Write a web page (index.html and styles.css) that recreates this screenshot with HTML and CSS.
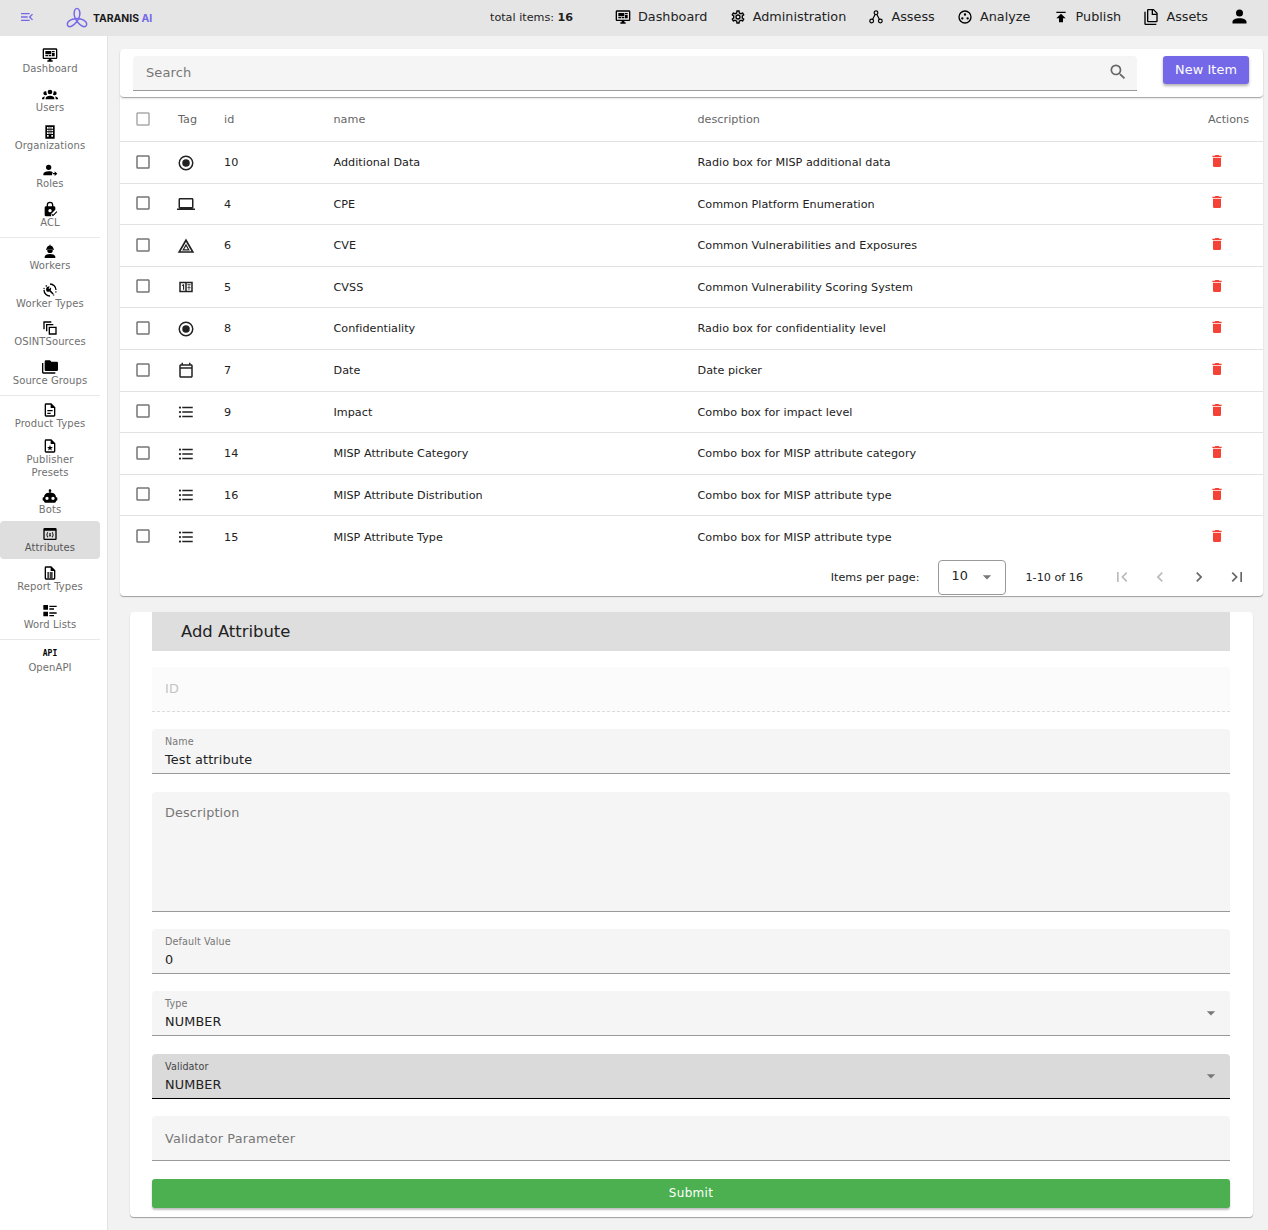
FILE: index.html
```html
<!doctype html>
<html lang="en">
<head>
	<meta charset="UTF-8" />
	<title>Taranis AI - Attributes</title>
	<link rel="stylesheet" href="styles.css">
</head>
<body>
<svg class="sprite" xmlns="http://www.w3.org/2000/svg">
	<symbol id="i-monitor" viewBox="0 0 24 24"><path d="M21,16V4H3V16H21M21,2A2,2 0 0,1 23,4V16A2,2 0 0,1 21,18H14V20H16V22H8V20H10V18H3C1.89,18 1,17.1 1,16V4C1,2.89 1.89,2 3,2H21M5,6H14V11H5V6M15,6H19V8H15V6M19,9V14H15V9H19M5,12H9V14H5V12M10,12H14V14H10V12Z"/></symbol>
	<symbol id="i-users" viewBox="0 0 24 24"><path d="M12,5.5A3.5,3.5 0 0,1 15.5,9A3.5,3.5 0 0,1 12,12.5A3.5,3.5 0 0,1 8.5,9A3.5,3.5 0 0,1 12,5.5M5,8C5.56,8 6.08,8.15 6.53,8.42C6.38,9.85 6.8,11.27 7.66,12.38C7.16,13.34 6.16,14 5,14A3,3 0 0,1 2,11A3,3 0 0,1 5,8M19,8A3,3 0 0,1 22,11A3,3 0 0,1 19,14C17.84,14 16.84,13.34 16.34,12.38C17.2,11.27 17.62,9.85 17.47,8.42C17.92,8.15 18.44,8 19,8M5.5,18.25C5.5,16.18 8.41,14.5 12,14.5C15.59,14.5 18.5,16.18 18.5,18.25V20H5.5V18.25M0,20V18.5C0,17.11 1.89,15.94 4.45,15.6C3.86,16.28 3.5,17.22 3.5,18.25V20H0M24,20H20.5V18.25C20.5,17.22 20.14,16.28 19.55,15.6C22.11,15.94 24,17.11 24,18.5V20Z"/></symbol>
	<symbol id="i-office" viewBox="0 0 24 24"><path fill-rule="evenodd" d="M5,2H19V22H5V2M7.5,4.5V7H10V4.5H7.5M11,4.5V7H13V4.5H11M14,4.5V7H16.5V4.5H14M7.5,8.5V11H10V8.5H7.5M11,8.5V11H13V8.5H11M14,8.5V11H16.5V8.5H14M7.5,12.5V15H10V12.5H7.5M11,12.5V15H13V12.5H11M14,12.5V15H16.5V12.5H14M7.5,16.5V19H10V16.5H7.5M14,16.5V19H16.5V16.5H14Z"/></symbol>
	<symbol id="i-role" viewBox="0 0 24 24"><path d="M10,4A4,4 0 0,1 14,8A4,4 0 0,1 10,12A4,4 0 0,1 6,8A4,4 0 0,1 10,4M10,14C13,14 15.5,14.8 16.8,16H15V20H2V18C2,15.79 5.58,14 10,14M19,14L23,17.5L19,21V18.5H16V16.5H19V14Z"/></symbol>
	<symbol id="i-lock" viewBox="0 0 24 24"><path d="M12,1A5,5 0 0,1 17,6V8H18A2,2 0 0,1 20,10V13.2L13.2,20L13.9,23H6A2,2 0 0,1 4,21V10A2,2 0 0,1 6,8H7V6A5,5 0 0,1 12,1M12,3A3,3 0 0,0 9,6V8H15V6A3,3 0 0,0 12,3M12,12A2.5,2.5 0 0,0 9.5,14.5A2.5,2.5 0 0,0 12,17A2.5,2.5 0 0,0 14.5,14.5A2.5,2.5 0 0,0 12,12M16.5,23L14,20.5L15.2,19.3L16.5,20.6L21.8,15.3L23,16.5L16.5,23Z"/></symbol>
	<symbol id="i-worker" viewBox="0 0 24 24"><path d="M12,15C16.42,15 20,16.79 20,19V21H4V19C4,16.79 7.58,15 12,15M8,9H16A4,4 0 0,1 12,13.5A4,4 0 0,1 8,9M11,1H13V3.5L14,2.5C15.8,3.4 17,5 17,7.2H18V8.5H6V7.2H7C7,5 8.2,3.4 10,2.5L11,3.5V1Z"/></symbol>
	<symbol id="i-wrench" viewBox="0 0 24 24"><path d="M12,2A10,10 0 0,1 22,12H20A8,8 0 0,0 12,4V2M12,22A10,10 0 0,1 2,12H4A8,8 0 0,0 12,20V22M2,10.5L4,11V9L2.6,8.6L2,10.5M5,6L6.5,7.4L7.8,5.8L6.3,4.6L5,6M20,14L22,14.2L21.4,16L20,15.6V14M17.5,18.5L18.9,19.5L17.6,20.8L16.2,19.6L17.5,18.5M7.5,7.5C8.8,6.5 10.5,6.4 11.8,7.3L9.8,9.3L11,10.5L13.1,8.4C14,9.7 13.9,11.4 12.9,12.5L17.5,17.1L15.9,18.7L11.3,14.1C10,15 8.3,15 7,14C5.6,12.4 5.9,9.3 7.5,7.5Z"/></symbol>
	<symbol id="i-copies" viewBox="0 0 24 24"><path d="M2,2H14V4H4V14H2V2M6,6H17V8H8V17H6V6M10,10H22V22H10V10M12,12V20H20V12H12Z"/></symbol>
	<symbol id="i-folders" viewBox="0 0 24 24"><path d="M22,4H14L12,2H6A2,2 0 0,0 4,4V16A2,2 0 0,0 6,18H22A2,2 0 0,0 24,16V6A2,2 0 0,0 22,4M2,6H0V20A2,2 0 0,0 2,22H20V20H2V6Z"/></symbol>
	<symbol id="i-file" viewBox="0 0 24 24"><path d="M6,2A2,2 0 0,0 4,4V20A2,2 0 0,0 6,22H18A2,2 0 0,0 20,20V8L14,2H6M6,4H13V9H18V20H6V4M8,12V14H16V12H8M8,16V18H13V16H8Z"/></symbol>
	<symbol id="i-file-star" viewBox="0 0 24 24"><path d="M6,2A2,2 0 0,0 4,4V20A2,2 0 0,0 6,22H18A2,2 0 0,0 20,20V8L14,2H6M6,4H13V9H18V20H6V4M12,10.5L13.2,13.4L16.3,13.6L13.9,15.6L14.7,18.6L12,17L9.3,18.6L10.1,15.6L7.7,13.6L10.8,13.4L12,10.5Z"/></symbol>
	<symbol id="i-robot" viewBox="0 0 24 24"><path d="M12,2A2,2 0 0,1 14,4C14,4.74 13.6,5.39 13,5.73V7H14A7,7 0 0,1 21,14H22A1,1 0 0,1 23,15V18A1,1 0 0,1 22,19H21V20A2,2 0 0,1 19,22H5A2,2 0 0,1 3,20V19H2A1,1 0 0,1 1,18V15A1,1 0 0,1 2,14H3A7,7 0 0,1 10,7H11V5.73C10.4,5.39 10,4.74 10,4A2,2 0 0,1 12,2M7.5,13A2.5,2.5 0 0,0 5,15.5A2.5,2.5 0 0,0 7.5,18A2.5,2.5 0 0,0 10,15.5A2.5,2.5 0 0,0 7.5,13M16.5,13A2.5,2.5 0 0,0 14,15.5A2.5,2.5 0 0,0 16.5,18A2.5,2.5 0 0,0 19,15.5A2.5,2.5 0 0,0 16.5,13Z"/></symbol>
	<symbol id="i-variable" viewBox="0 0 24 24"><path d="M20,3H4A2,2 0 0,0 2,5V19A2,2 0 0,0 4,21H20A2,2 0 0,0 22,19V5A2,2 0 0,0 20,3M20,19H4V7H20V19M8.3,9C7.2,10.4 6.7,11.8 6.7,13.2C6.7,14.6 7.2,16 8.3,17.4L9.3,16.9C8.5,15.7 8.1,14.5 8.1,13.2C8.1,11.9 8.5,10.7 9.3,9.5L8.3,9M15.7,9L14.7,9.5C15.5,10.7 15.9,11.9 15.9,13.2C15.9,14.5 15.5,15.7 14.7,16.9L15.7,17.4C16.8,16 17.3,14.6 17.3,13.2C17.3,11.8 16.8,10.4 15.7,9M10.2,10.8L11.4,13.1L10,15.6H11.3L12,14.2L12.7,15.6H14L12.6,13.1L13.8,10.8H12.5L12,12L11.5,10.8H10.2Z"/></symbol>
	<symbol id="i-file-table" viewBox="0 0 24 24"><path d="M6,2A2,2 0 0,0 4,4V20A2,2 0 0,0 6,22H18A2,2 0 0,0 20,20V8L14,2H6M6,4H13V9H18V20H6V4M8,11H11V13H8V11M12,11H16V13H12V11M8,14H11V16H8V14M12,14H16V16H12V14M8,17H11V19H8V17M12,17H16V19H12V17Z"/></symbol>
	<symbol id="i-wordlist" viewBox="0 0 24 24"><path d="M2,3H9V10H2V3M11,4H22V6H11V4M11,8H18V10H11V8M2,13H9V20H2V13M11,14H22V16H11V14M11,18H18V20H11V18Z"/></symbol>
	<symbol id="i-radio" viewBox="0 0 24 24"><path d="M12,20A8,8 0 0,1 4,12A8,8 0 0,1 12,4A8,8 0 0,1 20,12A8,8 0 0,1 12,20M12,2A10,10 0 0,0 2,12A10,10 0 0,0 12,22A10,10 0 0,0 22,12A10,10 0 0,0 12,2M12,7A5,5 0 0,0 7,12A5,5 0 0,0 12,17A5,5 0 0,0 17,12A5,5 0 0,0 12,7Z"/></symbol>
	<symbol id="i-laptop" viewBox="0 0 24 24"><path d="M4,6H20V16H4M20,18A2,2 0 0,0 22,16V6C22,4.89 21.1,4 20,4H4C2.89,4 2,4.89 2,6V16A2,2 0 0,0 4,18H0V20H24V18H20Z"/></symbol>
	<symbol id="i-triangle" viewBox="0 0 24 24"><path fill-rule="evenodd" d="M12,2L1,21H23L12,2M12,6.5L19.2,19H4.8L12,6.5M12,9L6.9,18H17.1L12,9M12,12.2L14.4,16.4H9.6L12,12.2Z"/></symbol>
	<symbol id="i-numeric" viewBox="0 0 24 24"><path fill-rule="evenodd" d="M3,5H21V19H3V5M5,7V17H11V7H5M13,7V17H19V7H13M6.5,9.5L8,8.3H9.5V15.8H8V10L6.5,11V9.5M14,8.3H18V9.6H14V8.3M15.3,10.3H16.7V11.6H15.3V10.3M14,12.3H18V13.6H14V12.3M15.3,14.2H16.7V15.8H15.3V14.2Z"/></symbol>
	<symbol id="i-calendar" viewBox="0 0 24 24"><path d="M19 3H18V1H16V3H8V1H6V3H5C3.9 3 3 3.9 3 5V19C3 20.1 3.9 21 5 21H19C20.1 21 21 20.1 21 19V5C21 3.9 20.1 3 19 3M19 19H5V9H19V19M19 7H5V5H19V7Z"/></symbol>
	<symbol id="i-list" viewBox="0 0 24 24"><path d="M7,5H21V7H7V5M7,13V11H21V13H7M4,4.5A1.5,1.5 0 0,1 5.5,6A1.5,1.5 0 0,1 4,7.5A1.5,1.5 0 0,1 2.5,6A1.5,1.5 0 0,1 4,4.5M4,10.5A1.5,1.5 0 0,1 5.5,12A1.5,1.5 0 0,1 4,13.5A1.5,1.5 0 0,1 2.5,12A1.5,1.5 0 0,1 4,10.5M7,19V17H21V19H7M4,16.5A1.5,1.5 0 0,1 5.5,18A1.5,1.5 0 0,1 4,19.5A1.5,1.5 0 0,1 2.5,18A1.5,1.5 0 0,1 4,16.5Z"/></symbol>
	<symbol id="i-delete" viewBox="0 0 24 24"><path d="M19,4H15.5L14.5,3H9.5L8.5,4H5V6H19M6,19A2,2 0 0,0 8,21H16A2,2 0 0,0 18,19V7H6V19Z"/></symbol>
	<symbol id="i-box" viewBox="0 0 24 24"><path d="M19,3H5C3.89,3 3,3.89 3,5V19A2,2 0 0,0 5,21H19A2,2 0 0,0 21,19V5C21,3.89 20.1,3 19,3M19,5V19H5V5H19Z"/></symbol>
	<symbol id="i-search" viewBox="0 0 24 24"><path d="M9.5,3A6.5,6.5 0 0,1 16,9.5C16,11.11 15.41,12.59 14.44,13.73L14.71,14H15.5L20.5,19L19,20.5L14,15.5V14.71L13.73,14.44C12.59,15.41 11.11,16 9.5,16A6.5,6.5 0 0,1 3,9.5A6.5,6.5 0 0,1 9.5,3M9.5,5C7,5 5,7 5,9.5C5,12 7,14 9.5,14C12,14 14,12 14,9.5C14,7 12,5 9.5,5Z"/></symbol>
	<symbol id="i-menu" viewBox="0 0 24 24"><path d="M21,15.61L19.59,17L14.58,12L19.59,7L21,8.39L17.44,12L21,15.61M3,6H16V8H3V6M3,13V11H13V13H3M3,18V16H16V18H3Z"/></symbol>
	<symbol id="i-cog" viewBox="0 0 24 24"><path d="M12,8A4,4 0 0,1 16,12A4,4 0 0,1 12,16A4,4 0 0,1 8,12A4,4 0 0,1 12,8M12,10A2,2 0 0,0 10,12A2,2 0 0,0 12,14A2,2 0 0,0 14,12A2,2 0 0,0 12,10M10,22C9.75,22 9.54,21.82 9.5,21.58L9.13,18.93C8.5,18.68 7.96,18.34 7.44,17.94L4.95,18.95C4.73,19.03 4.46,18.95 4.34,18.73L2.34,15.27C2.21,15.05 2.27,14.78 2.46,14.63L4.57,12.97L4.5,12L4.57,11L2.46,9.37C2.27,9.22 2.21,8.95 2.34,8.73L4.34,5.27C4.46,5.05 4.73,4.96 4.95,5.05L7.44,6.05C7.96,5.66 8.5,5.32 9.13,5.07L9.5,2.42C9.54,2.18 9.75,2 10,2H14C14.25,2 14.46,2.18 14.5,2.42L14.87,5.07C15.5,5.32 16.04,5.66 16.56,6.05L19.05,5.05C19.27,4.96 19.54,5.05 19.66,5.27L21.66,8.73C21.79,8.95 21.73,9.22 21.54,9.37L19.43,11L19.5,12L19.43,13L21.54,14.63C21.73,14.78 21.79,15.05 21.66,15.27L19.66,18.73C19.54,18.95 19.27,19.04 19.05,18.95L16.56,17.95C16.04,18.34 15.5,18.68 14.87,18.93L14.5,21.58C14.46,21.82 14.25,22 14,22H10M11.25,4L10.88,6.61C9.68,6.86 8.62,7.5 7.85,8.39L5.44,7.35L4.69,8.65L6.8,10.2C6.4,11.37 6.4,12.64 6.8,13.8L4.68,15.36L5.43,16.66L7.86,15.62C8.63,16.5 9.68,17.14 10.87,17.38L11.24,20H12.76L13.13,17.39C14.32,17.14 15.37,16.5 16.14,15.62L18.57,16.66L19.32,15.36L17.2,13.81C17.6,12.64 17.6,11.37 17.2,10.2L19.31,8.65L18.56,7.35L16.15,8.39C15.38,7.5 14.32,6.86 13.12,6.62L12.75,4H11.25Z"/></symbol>
	<symbol id="i-graph" viewBox="0 0 24 24"><g fill="none" stroke="#000" stroke-width="1.8"><circle cx="12" cy="5.5" r="2.8"/><circle cx="5.5" cy="18" r="2.8"/><circle cx="18.5" cy="18" r="2.8"/><path d="M10.6,8.2L7,15.4M13.4,8.2L17,15.4"/></g></symbol>
	<symbol id="i-analyze" viewBox="0 0 24 24"><path d="M12,2A10,10 0 0,1 22,12A10,10 0 0,1 12,22A10,10 0 0,1 2,12A10,10 0 0,1 12,2M12,4A8,8 0 0,0 4,12A8,8 0 0,0 12,20A8,8 0 0,0 20,12A8,8 0 0,0 12,4M12,6.5A1.8,1.8 0 1,1 12,10.1A1.8,1.8 0 1,1 12,6.5M8,12.2A1.8,1.8 0 1,1 8,15.8A1.8,1.8 0 1,1 8,12.2M16,12.2A1.8,1.8 0 1,1 16,15.8A1.8,1.8 0 1,1 16,12.2Z"/></symbol>
	<symbol id="i-publish" viewBox="0 0 24 24"><path d="M5,4V6H19V4H5M5,14H9V20H15V14H19L12,7L5,14Z"/></symbol>
	<symbol id="i-assets" viewBox="0 0 24 24"><path d="M15,7H20.5L15,1.5V7M8,0H16L22,6V18A2,2 0 0,1 20,20H8C6.89,20 6,19.1 6,18V2A2,2 0 0,1 8,0M4,4V22H20V24H4A2,2 0 0,1 2,22V4H4M8,2V18H20V9H13V2H8Z"/></symbol>
	<symbol id="i-account" viewBox="0 0 24 24"><path d="M12,4A4,4 0 0,1 16,8A4,4 0 0,1 12,12A4,4 0 0,1 8,8A4,4 0 0,1 12,4M12,14C16.42,14 20,15.79 20,18V20H4V18C4,15.79 7.58,14 12,14Z"/></symbol>
	<symbol id="i-first" viewBox="0 0 24 24"><path d="M18.41,16.59L13.82,12L18.41,7.41L17,6L11,12L17,18L18.41,16.59M6,6H8V18H6V6Z"/></symbol>
	<symbol id="i-prev" viewBox="0 0 24 24"><path d="M15.41,16.58L10.83,12L15.41,7.41L14,6L8,12L14,18L15.41,16.58Z"/></symbol>
	<symbol id="i-next" viewBox="0 0 24 24"><path d="M8.59,16.58L13.17,12L8.59,7.41L10,6L16,12L10,18L8.59,16.58Z"/></symbol>
	<symbol id="i-last" viewBox="0 0 24 24"><path d="M5.59,7.41L10.18,12L5.59,16.59L7,18L13,12L7,6L5.59,7.41M16,6H18V18H16V6Z"/></symbol>
	<symbol id="i-drop" viewBox="0 0 24 24"><path d="M7,10L12,15L17,10H7Z"/></symbol>
</svg>

<header class="topbar">
	<svg class="ico burger"><use href="#i-menu"/></svg>
	<div class="logo">
		<svg class="logo_mark" viewBox="0 0 24 24" fill="none" stroke="#7468e8" stroke-width="1.6"><path d="M12,1.5C9.5,1.5 8.5,5 9,9C9.7,14 14,19 18,21C21,22.3 23,20.5 22.5,18C22,15.5 18,12.5 12,12.5C6,12.5 2,15.5 1.5,18C1,20.5 3,22.3 6,21C10,19 14.3,14 15,9C15.5,5 14.5,1.5 12,1.5Z"/></svg>
		<span class="logo_text">TARANIS <em>AI</em></span>
	</div>
	<div class="total">total items: <b>16</b></div>
	<nav class="topnav">
		<a><svg class="ico"><use href="#i-monitor"/></svg>Dashboard</a>
		<a><svg class="ico"><use href="#i-cog"/></svg>Administration</a>
		<a><svg class="ico"><use href="#i-graph"/></svg>Assess</a>
		<a><svg class="ico"><use href="#i-analyze"/></svg>Analyze</a>
		<a><svg class="ico"><use href="#i-publish"/></svg>Publish</a>
		<a><svg class="ico"><use href="#i-assets"/></svg>Assets</a>
		<svg class="ico user"><use href="#i-account"/></svg>
	</nav>
</header>

<div class="wrap">
	<aside class="side">
		<a class="side_item"><svg class="ico"><use href="#i-monitor"/></svg>Dashboard</a>
		<a class="side_item"><svg class="ico"><use href="#i-users"/></svg>Users</a>
		<a class="side_item"><svg class="ico"><use href="#i-office"/></svg>Organizations</a>
		<a class="side_item"><svg class="ico"><use href="#i-role"/></svg>Roles</a>
		<a class="side_item"><svg class="ico"><use href="#i-lock"/></svg>ACL</a>
		<hr class="side_line">
		<a class="side_item"><svg class="ico"><use href="#i-worker"/></svg>Workers</a>
		<a class="side_item"><svg class="ico"><use href="#i-wrench"/></svg>Worker Types</a>
		<a class="side_item"><svg class="ico"><use href="#i-copies"/></svg>OSINTSources</a>
		<a class="side_item"><svg class="ico"><use href="#i-folders"/></svg>Source Groups</a>
		<hr class="side_line">
		<a class="side_item"><svg class="ico"><use href="#i-file"/></svg>Product Types</a>
		<a class="side_item tall"><svg class="ico"><use href="#i-file-star"/></svg>Publisher<br>Presets</a>
		<a class="side_item short"><svg class="ico"><use href="#i-robot"/></svg>Bots</a>
		<a class="side_item on"><svg class="ico"><use href="#i-variable"/></svg>Attributes</a>
		<a class="side_item"><svg class="ico"><use href="#i-file-table"/></svg>Report Types</a>
		<a class="side_item"><svg class="ico"><use href="#i-wordlist"/></svg>Word Lists</a>
		<hr class="side_line">
		<a class="side_item"><span class="api">API</span>OpenAPI</a>
	</aside>

	<main class="main">
		<section class="grid_card">
			<div class="toolbar">
				<div class="search">
					<span>Search</span>
					<svg class="ico"><use href="#i-search"/></svg>
				</div>
				<button class="new_btn">New Item</button>
			</div>
			<table class="tbl">
				<thead>
					<tr>
						<th class="c_check"><svg class="ico box pale"><use href="#i-box"/></svg></th>
						<th class="c_tag">Tag</th>
						<th class="c_id">id</th>
						<th class="c_name">name</th>
						<th>description</th>
						<th class="c_act">Actions</th>
					</tr>
				</thead>
				<tbody>
					<tr><td class="c_check"><svg class="ico box"><use href="#i-box"/></svg></td><td><svg class="ico tag"><use href="#i-radio"/></svg></td><td>10</td><td>Additional Data</td><td>Radio box for MISP additional data</td><td class="c_act"><svg class="ico del"><use href="#i-delete"/></svg></td></tr>
					<tr><td class="c_check"><svg class="ico box"><use href="#i-box"/></svg></td><td><svg class="ico tag"><use href="#i-laptop"/></svg></td><td>4</td><td>CPE</td><td>Common Platform Enumeration</td><td class="c_act"><svg class="ico del"><use href="#i-delete"/></svg></td></tr>
					<tr><td class="c_check"><svg class="ico box"><use href="#i-box"/></svg></td><td><svg class="ico tag"><use href="#i-triangle"/></svg></td><td>6</td><td>CVE</td><td>Common Vulnerabilities and Exposures</td><td class="c_act"><svg class="ico del"><use href="#i-delete"/></svg></td></tr>
					<tr><td class="c_check"><svg class="ico box"><use href="#i-box"/></svg></td><td><svg class="ico tag"><use href="#i-numeric"/></svg></td><td>5</td><td>CVSS</td><td>Common Vulnerability Scoring System</td><td class="c_act"><svg class="ico del"><use href="#i-delete"/></svg></td></tr>
					<tr><td class="c_check"><svg class="ico box"><use href="#i-box"/></svg></td><td><svg class="ico tag"><use href="#i-radio"/></svg></td><td>8</td><td>Confidentiality</td><td>Radio box for confidentiality level</td><td class="c_act"><svg class="ico del"><use href="#i-delete"/></svg></td></tr>
					<tr><td class="c_check"><svg class="ico box"><use href="#i-box"/></svg></td><td><svg class="ico tag"><use href="#i-calendar"/></svg></td><td>7</td><td>Date</td><td>Date picker</td><td class="c_act"><svg class="ico del"><use href="#i-delete"/></svg></td></tr>
					<tr><td class="c_check"><svg class="ico box"><use href="#i-box"/></svg></td><td><svg class="ico tag"><use href="#i-list"/></svg></td><td>9</td><td>Impact</td><td>Combo box for impact level</td><td class="c_act"><svg class="ico del"><use href="#i-delete"/></svg></td></tr>
					<tr><td class="c_check"><svg class="ico box"><use href="#i-box"/></svg></td><td><svg class="ico tag"><use href="#i-list"/></svg></td><td>14</td><td>MISP Attribute Category</td><td>Combo box for MISP attribute category</td><td class="c_act"><svg class="ico del"><use href="#i-delete"/></svg></td></tr>
					<tr><td class="c_check"><svg class="ico box"><use href="#i-box"/></svg></td><td><svg class="ico tag"><use href="#i-list"/></svg></td><td>16</td><td>MISP Attribute Distribution</td><td>Combo box for MISP attribute type</td><td class="c_act"><svg class="ico del"><use href="#i-delete"/></svg></td></tr>
					<tr><td class="c_check"><svg class="ico box"><use href="#i-box"/></svg></td><td><svg class="ico tag"><use href="#i-list"/></svg></td><td>15</td><td>MISP Attribute Type</td><td>Combo box for MISP attribute type</td><td class="c_act"><svg class="ico del"><use href="#i-delete"/></svg></td></tr>
				</tbody>
			</table>
			<div class="pager">
				<span class="pager_label">Items per page:</span>
				<div class="pager_select"><span>10</span><svg class="ico"><use href="#i-drop"/></svg></div>
				<span class="pager_range">1-10 of 16</span>
				<div class="pager_btns">
					<svg class="ico off"><use href="#i-first"/></svg>
					<svg class="ico off"><use href="#i-prev"/></svg>
					<svg class="ico"><use href="#i-next"/></svg>
					<svg class="ico"><use href="#i-last"/></svg>
				</div>
			</div>
		</section>

		<section class="form_card">
			<h2 class="form_title">Add Attribute</h2>
			<div class="field disabled"><span class="ph">ID</span></div>
			<div class="field"><label>Name</label><span class="val">Test attribute</span></div>
			<div class="field area"><span class="ph">Description</span></div>
			<div class="field"><label>Default Value</label><span class="val">0</span></div>
			<div class="field sel"><label>Type</label><span class="val">NUMBER</span><svg class="ico"><use href="#i-drop"/></svg></div>
			<div class="field sel focus"><label>Validator</label><span class="val">NUMBER</span><svg class="ico"><use href="#i-drop"/></svg></div>
			<div class="field"><span class="ph">Validator Parameter</span></div>
			<button class="submit">Submit</button>
		</section>
	</main>
</div>
</body>
</html>
```

FILE: styles.css
```css
* {box-sizing:border-box;}
html, body {margin:0; padding:0;}
body {font-family:"DejaVu Sans", sans-serif; background:#f2f2f2; color:#222; width:1268px; height:1230px; overflow:hidden;}
.sprite {display:none;}
.ico {width:24px; height:24px; fill:currentColor; color:#000; flex:none; display:block;}

.topbar {height:36px; background:#e5e5e5; display:flex; align-items:center;}
.burger {width:16px; height:16px; color:#7468e8; margin:0 0 2px 19px;}
.logo {display:flex; align-items:center; margin-left:31px; width:87px; flex:none;}
.logo_mark {width:22px; height:22px; flex:none;}
.logo_text {font-family:"Inter", sans-serif; font-weight:700; font-size:10.4px; margin-left:5px; color:#1a1a1a; white-space:nowrap;}
.logo_text em {font-style:normal; color:#7468e8;}
.total {margin-left:337px; font-size:11.2px; width:98px; flex:none; padding-bottom:2px;}
.topnav {display:flex; align-items:center; margin-left:27px; font-size:12.8px; flex:none; padding-bottom:3px;}
.topnav a {display:flex; align-items:center; margin-right:22.2px; color:#222;}
.topnav .ico {width:16px; height:16px; margin-right:7px;}
.topnav .user {margin:0 0 0 -1px; width:21px; height:21px;}

.wrap {display:flex; height:1194px;}
.side {width:108px; flex:none; background:#fff; border-right:1px solid #e2e2e2; padding:5.9px 7px 0 0; display:flex; flex-direction:column; align-items:stretch;}
.side_item {height:38.4px; display:flex; flex-direction:column; align-items:center; justify-content:flex-end; padding-bottom:5px; font-size:10px; line-height:13px; letter-spacing:.1px; color:#707070; text-align:center; border-radius:4px; flex:none;}
.side_item .ico {width:16px; height:16px; margin-bottom:-1px;}
.side_item.tall {height:49.8px;}
.side_item.short {height:36.4px;}
.side_item.on {background:#dedede; color:#555;}
.side_line {border:0; border-top:1px solid #e8e8e8; height:0; flex:none; margin:3.4px 0 0;}
.api {font-family:"DejaVu Sans Mono", monospace; font-weight:700; font-size:8px; line-height:10px; color:#000; height:14px; padding-top:2px;}

.main {flex:1; padding:13px 5px 0 12px;}
.grid_card {background:#fff; border-radius:4px; box-shadow:0 1px 1px rgba(0,0,0,.35);}
.toolbar {height:49px; display:flex; align-items:flex-start; padding:7px 14px 0 13px; border-bottom:1px solid #aaa; border-radius:4px; box-shadow:0 1px 2px rgba(0,0,0,.1);}
.search {width:1004px; height:35px; background:#f5f5f5; border-bottom:1px solid #999; border-radius:4px 4px 0 0; display:flex; align-items:center; justify-content:space-between; padding:0 9px 2px 13px; font-size:13px; letter-spacing:.1px; color:#777;}
.search .ico {width:20px; height:20px; color:#666;}
.new_btn {margin-left:26px; width:86px; height:28px; padding:0 0 2px; background:#7468e8; color:#fff; border:0; border-radius:3px; font:12.8px "DejaVu Sans", sans-serif; letter-spacing:.1px; box-shadow:0 2px 3px rgba(0,0,0,.3);}

.tbl {width:100%; border-collapse:separate; border-spacing:0; table-layout:fixed; font-size:11.2px; letter-spacing:.02px;}
.tbl th {font-weight:400; color:#666; text-align:left; height:44px; border-bottom:1px solid #e2e2e2; padding:0 0 0 16px;}
.tbl td {height:41.6px; border-bottom:1px solid #e2e2e2; padding:.6px 0 0 16px;}
.tbl tr:last-child td {border-bottom:0;}
.c_check {width:42px;}
.c_tag {width:46px;}
.c_id {width:109.5px;}
.c_name {width:364px;}
.tbl .c_act {width:100px; text-align:right; padding:0 14px 0 0;}
.tbl td.c_act {text-align:left; padding:0 0 0 46px;}
.box {width:18px; height:18px; color:#757575; margin:0 0 2px -2px;}
.box.pale {color:#aaa;}
.tag {width:18px; height:18px; color:#222; margin-left:-1px;}
.del {width:16px; height:16px; color:#f44336; margin-bottom:3px;}

.pager {height:38px; display:flex; align-items:flex-start; justify-content:flex-end; font-size:11.2px; padding:2px 16px 0 0;}
.pager_label, .pager_range {line-height:35px;}
.pager_select {width:68px; height:35px; border:1px solid #999; border-radius:4px; margin-left:18px; display:flex; align-items:center; justify-content:space-between; padding:0 8px 3px 13px; font-size:12.8px; letter-spacing:.1px;}
.pager_select .ico {color:#777; width:20px; height:20px; margin-top:3px;}
.pager_range {margin-left:20px; width:86px;}
.pager_btns {display:flex; gap:18.5px; padding-top:7px;}
.pager_btns .ico {width:20px; height:20px; color:#666;}
.pager_btns .off {color:#bbb;}

.form_card {margin:16px 10px 0; background:#fff; border-radius:4px; padding:0 23px 9px 22px; box-shadow:0 1px 1px rgba(0,0,0,.35); display:flex; flex-direction:column;}
.form_title {margin:0 0 16px; height:39px; background:#dedede; font-size:16.4px; font-weight:400; line-height:39px; padding-left:29px; color:#222;}
.field {height:45px; background:#f5f5f5; border-bottom:1px solid #999; border-radius:4px 4px 0 0; padding:0 13px; margin-bottom:17.5px; position:relative; display:flex; flex-direction:column; justify-content:center; font-size:12.8px; letter-spacing:.15px; flex:none;}
.field label {font-size:9.6px; line-height:12px; letter-spacing:.1px; color:#777; margin-top:3px;}
.field .val {line-height:18px; margin-top:3px;}
.field .ph {color:#777;}
.field .ico {position:absolute; right:9px; top:12px; width:20px; height:20px; color:#777;}
.disabled {background:#fbfbfb; border-bottom:1px dashed #ddd;}
.disabled .ph {color:#c4c4c4;}
.area {height:120px; margin-bottom:17px; justify-content:flex-start; padding-top:13px;}
.focus {background:#dadada; border-bottom-color:#000;}
.focus label {color:#444;}
.submit {height:29px; padding:0; background:#4caf50; color:#fff; border:0; border-radius:3px; font:12px "DejaVu Sans", sans-serif; letter-spacing:.3px; box-shadow:0 2px 2px rgba(0,0,0,.25); flex:none;}
```
